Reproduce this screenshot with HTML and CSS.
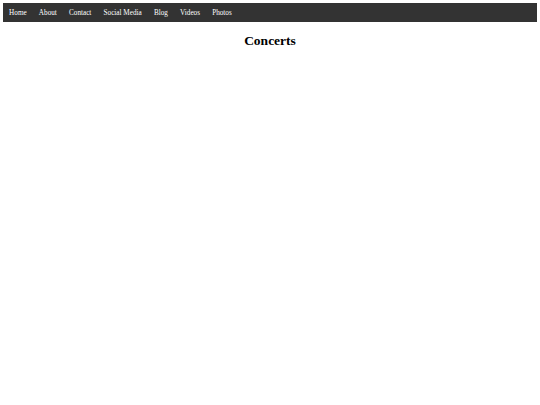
FILE: index.html
```html
<!DOCTYPE html>
<html>
<head>
<meta charset="utf-8">
<link rel="stylesheet" href="styles.css">
</head>
<body>
<ul class="nav">
  <li><a href="#">Home</a></li>
  <li><a href="#">About</a></li>
  <li><a href="#">Contact</a></li>
  <li><a href="#">Social Media</a></li>
  <li><a href="#">Blog</a></li>
  <li><a href="#">Videos</a></li>
  <li><a href="#">Photos</a></li>
</ul>
<h1 class="title">Concerts</h1>
</body>
</html>
```
FILE: styles.css
```css
body {
  margin: 3px;
  font-family: "Liberation Serif", "Times New Roman", serif;
  background: #fff;
}
.nav {
  list-style: none;
  margin: 0;
  padding: 0;
  background: #333;
  display: flex;
}
.nav a {
  display: block;
  color: #fff;
  text-decoration: none;
  font-size: 7.2px;
  padding: 5.8px 6.1px 4.8px;
}
.title {
  text-align: center;
  font-size: 13.5px;
  margin: 11px 0 9px;
}
```
